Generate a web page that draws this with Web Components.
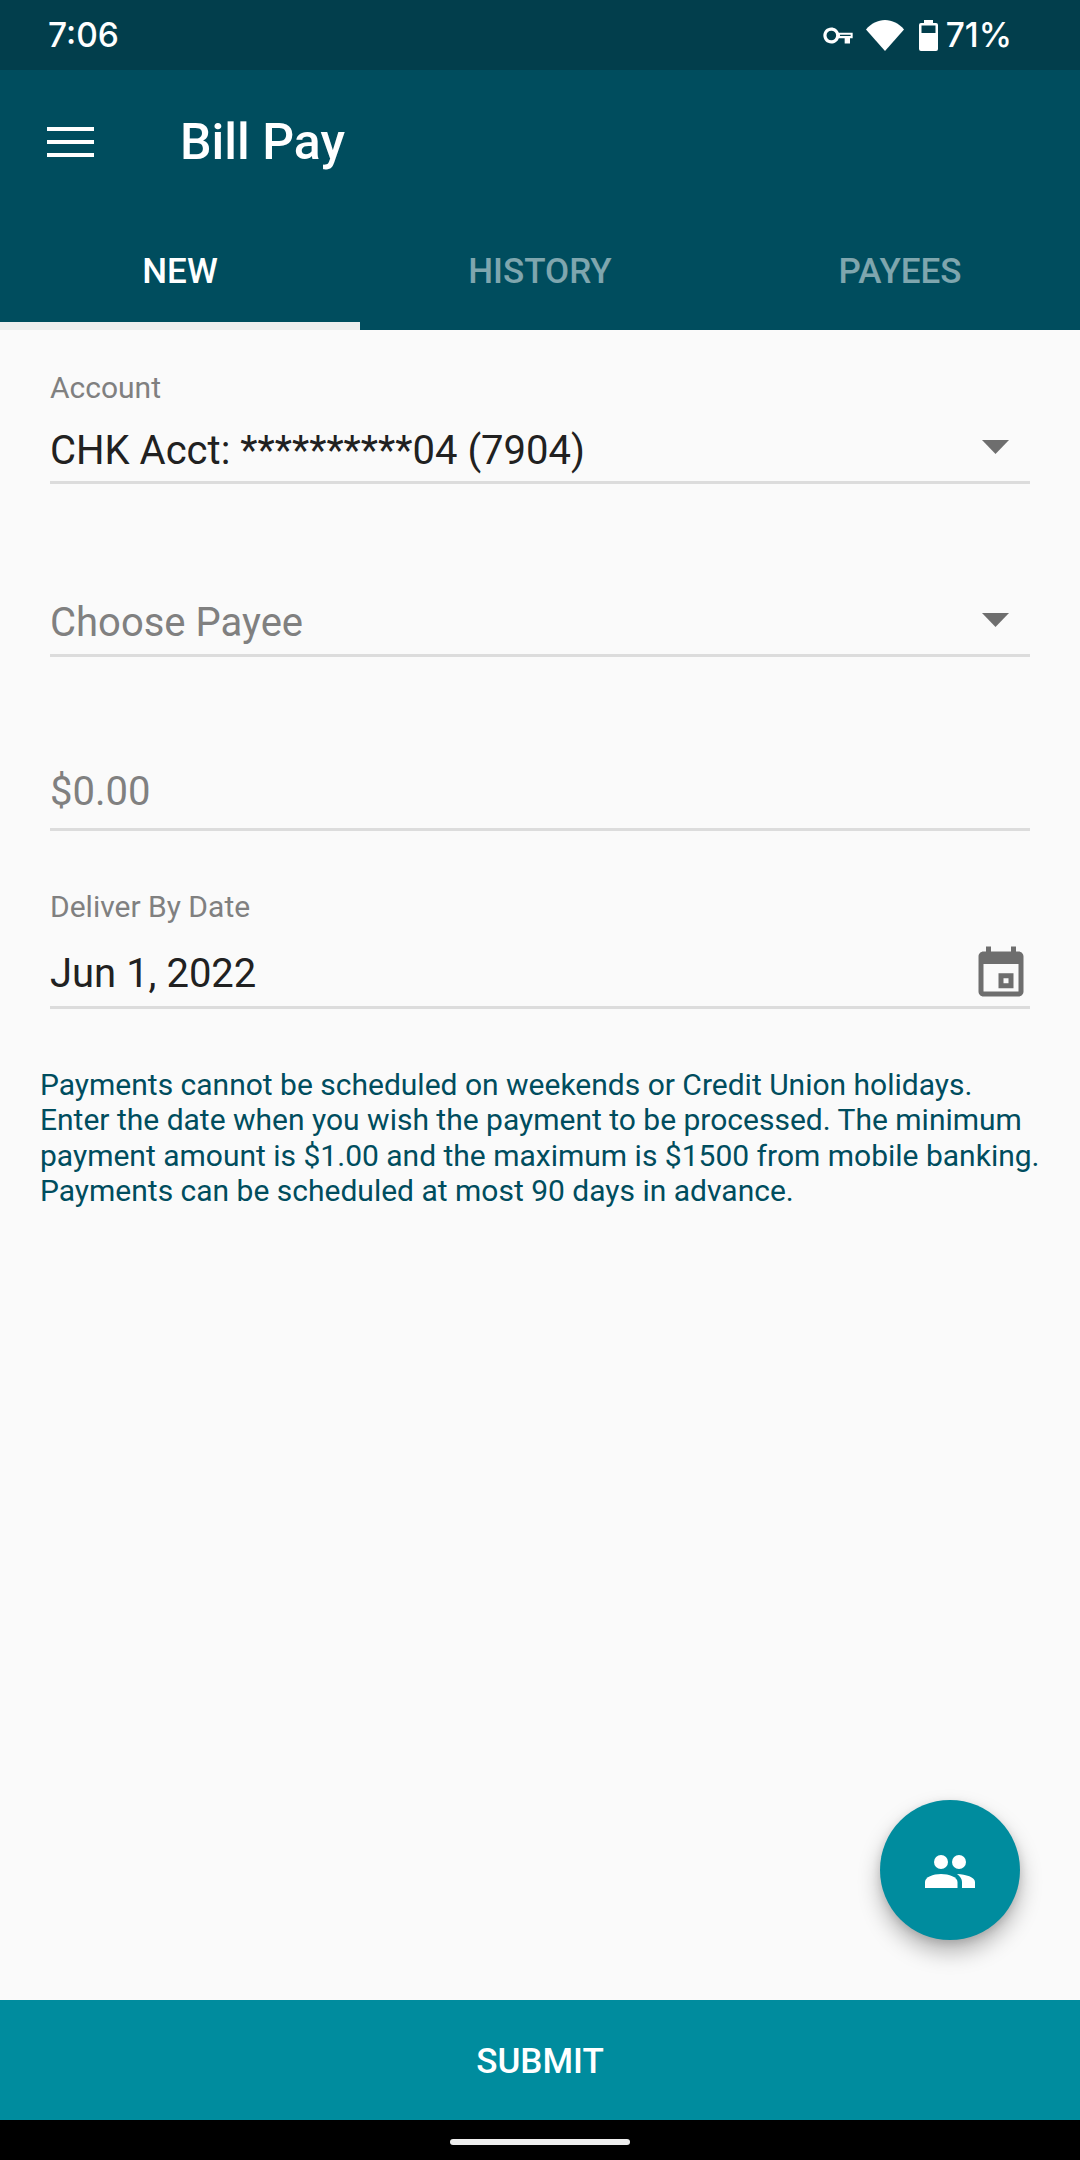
<!DOCTYPE html>
<html>
<head>
<meta charset="utf-8">
<style>
  html, body { margin: 0; padding: 0; background: #fafafa; }
  body { font-family: Roboto, "Liberation Sans", sans-serif; }
  bill-pay-app { width: 1080px; height: 2160px; }
</style>
</head>
<body>
<bill-pay-app>
  <status-bar slot="top" time="7:06" level="71%"></status-bar>
  <app-toolbar slot="top" title="Bill Pay" tabs="NEW,HISTORY,PAYEES"></app-toolbar>

  <form-field gap="41" hold="15" label="Account" caret>CHK Acct: **********04 (7904)</form-field>
  <form-field gap="109" lift="2" empty caret>Choose Payee</form-field>
  <form-field gap="110" lift="12" empty>$0.00</form-field>
  <form-field gap="59" hold="21" lift="3" label="Deliver By Date" calendar>Jun 1, 2022</form-field>
  <help-note>
    Payments cannot be scheduled on weekends or Credit Union holidays.<br>
    Enter the date when you wish the payment to be processed. The minimum<br>
    payment amount is $1.00 and the maximum is $1500 from mobile banking.<br>
    Payments can be scheduled at most 90 days in advance.
  </help-note>
  <fab-button slot="fab"></fab-button>

  <submit-bar slot="bottom">SUBMIT</submit-bar>
  <nav-handle slot="bottom"></nav-handle>
</bill-pay-app>

<script>
class BillPayApp extends HTMLElement {
  constructor() {
    super()
    this.attachShadow({ mode: "open" }).innerHTML = `
      <style>
        :host { display: flex; flex-direction: column; background: #fafafa; color: #212121; }
        main { position: relative; flex: 1; min-height: 0; }
        .fab { position: absolute; right: 60px; bottom: 60px; }
      </style>
      <slot name="top"></slot>
      <main>
        <slot></slot>
        <div class="fab"><slot name="fab"></slot></div>
      </main>
      <slot name="bottom"></slot>
    `
  }
}

class StatusBar extends HTMLElement {
  connectedCallback() {
    this.attachShadow({ mode: "open" }).innerHTML = `
      <style>
        :host {
          display: flex; align-items: center; justify-content: space-between;
          height: 70px; padding: 0 68px 0 48px; background: #023e4c; color: #fff;
          font: 500 33.500px/70px Inter, Lato, sans-serif;
        }
        .right { display: flex; align-items: center; }
        svg { display: block; fill: #fff; }
        .key { margin-right: 12px; }
        .wifi { margin-right: 15px; }
        .batt { margin-right: 8px; }
      </style>
      <span>${this.getAttribute("time")}</span>
      <div class="right">
        <svg class="key" width="32" height="19" viewBox="0 5 24 14">
          <path fill-rule="evenodd" d="M12.650 10C11.830 7.670 9.610 6 7 6c-3.310 0-6 2.690-6 6s2.690 6 6 6c2.610 0 4.830-1.670 5.650-4H17v4h4v-4h2v-4zM7 8.400a3.600 3.600 0 1 1 0 7.200 3.600 3.600 0 0 1 0-7.200zM13.500 11.400h8v1h-8z"/>
        </svg>
        <svg class="wifi" width="38" height="31" viewBox="0 0 38 31">
          <path d="M19 31 0 9.500C5 3.500 12 0 19 0s14 3.500 19 9.500z"/>
        </svg>
        <svg class="batt" width="19" height="31" viewBox="0 0 19 31">
          <path fill-rule="evenodd" d="M5 0h9v3h3a2 2 0 0 1 2 2v24a2 2 0 0 1-2 2H2a2 2 0 0 1-2-2V5a2 2 0 0 1 2-2h3zM2.500 5.500V13h14V5.500z"/>
        </svg>
        <span>${this.getAttribute("level")}</span>
      </div>
    `
  }
}

class AppToolbar extends HTMLElement {
  connectedCallback() {
    const tabs = this.getAttribute("tabs").split(",")
      .map((t, i) => `<div class="tab ${i == 0 ? "on" : ""}">${t}</div>`).join("")
    this.attachShadow({ mode: "open" }).innerHTML = `
      <style>
        :host { display: block; height: 260px; background: #004d5e; color: #fff; }
        .bar { display: flex; align-items: center; height: 144px; padding-left: 47px; }
        .burger { display: flex; flex-direction: column; gap: 9px; width: 47px; margin-right: 86px; }
        .burger i { display: block; height: 4px; background: #fff; }
        h1 { margin: 0; font: 500 50px/1 Roboto, sans-serif; }
        .tabs { display: grid; grid-template-columns: repeat(3, 360px); height: 116px; }
        .tab {
          display: flex; align-items: center; justify-content: center;
          box-sizing: border-box; padding-top: 7px; border-bottom: 8px solid transparent;
          font: 500 35px/1 Roboto, sans-serif; color: rgba(255, 255, 255, .5);
        }
        .tab.on { color: #fff; border-bottom-color: #eee; }
      </style>
      <div class="bar">
        <div class="burger"><i></i><i></i><i></i></div>
        <h1>${this.getAttribute("title")}</h1>
      </div>
      <div class="tabs">${tabs}</div>
    `
  }
}

class FormField extends HTMLElement {
  connectedCallback() {
    const label = this.getAttribute("label")
    const hold = this.getAttribute("hold") || 16
    const lift = this.getAttribute("lift") || 0
    let icon = ""
    if (this.hasAttribute("caret")) {
      icon = `<svg class="caret" width="27" height="14" viewBox="0 0 27 14"><path d="M0 0h27L13.500 14z"/></svg>`
    }
    if (this.hasAttribute("calendar")) {
      icon = `<svg class="cal" width="60" height="60" viewBox="0 0 24 24"><path fill-rule="evenodd" d="M16 1v2H8V1H6v2H5C3.890 3 3.010 3.900 3.010 5L3 19c0 1.100.89 2 2 2h14c1.100 0 2-.9 2-2V5c0-1.100-.9-2-2-2h-1V1zm3 18H5V8h14zM17 11.700h-6v6h6zM15 13.700v2h-2v-2z"/></svg>`
    }
    this.attachShadow({ mode: "open" }).innerHTML = `
      <style>
        :host {
          display: block; margin: ${this.getAttribute("gap")}px 50px 0;
          border-bottom: 3px solid #dcdcdc;
        }
        .label { font-size: 30px; line-height: 34px; color: #808080; margin-bottom: ${hold}px; }
        .row { display: flex; align-items: center; justify-content: space-between; height: 61px; }
        .value { font-size: 40px; line-height: 48px; color: #212121; padding-bottom: ${lift}px; }
        .value.empty { color: #808080; }
        svg { display: block; fill: #6e6e6e; }
        .caret { margin: -8px 21px 0 0; }
        .cal { margin: -4px -1px 0 0; }
      </style>
      ${label ? `<div class="label">${label}</div>` : ""}
      <div class="row">
        <div class="value ${this.hasAttribute("empty") ? "empty" : ""}"><slot></slot></div>
        ${icon}
      </div>
    `
  }
}

class HelpNote extends HTMLElement {
  constructor() {
    super()
    this.attachShadow({ mode: "open" }).innerHTML = `
      <style>
        :host {
          display: block; margin: 58px 0 0 40px; white-space: nowrap;
          font-size: 30px; line-height: 35.300px; color: #004d5e;
        }
      </style>
      <slot></slot>
    `
  }
}

class FabButton extends HTMLElement {
  constructor() {
    super()
    this.attachShadow({ mode: "open" }).innerHTML = `
      <style>
        :host {
          display: flex; align-items: center; justify-content: center;
          width: 140px; height: 140px; border-radius: 50%; background: #008c9e;
          box-shadow: 0 12px 22px rgba(0, 0, 0, .28), 0 3px 8px rgba(0, 0, 0, .12);
        }
        svg { display: block; fill: #fff; margin-top: 2px; }
      </style>
      <svg width="50" height="34" viewBox="0 0 50 34">
        <circle cx="16" cy="8" r="7"/>
        <circle cx="34" cy="8" r="7"/>
        <path d="M0 34v-6c0-5 8-8 16-8s16.500 3 16.500 8v6z"/>
        <path d="M32 20c9 .5 18 3 18 8v6H37v-6c0-3-2-6-5-8z"/>
      </svg>
    `
  }
}

class SubmitBar extends HTMLElement {
  constructor() {
    super()
    this.attachShadow({ mode: "open" }).innerHTML = `
      <style>
        :host {
          display: flex; align-items: center; justify-content: center;
          box-sizing: border-box; padding-top: 2px;
          height: 120px; background: #008c9e; color: #fff;
          font: 500 35px/1 Roboto, sans-serif;
        }
      </style>
      <slot></slot>
    `
  }
}

class NavHandle extends HTMLElement {
  constructor() {
    super()
    this.attachShadow({ mode: "open" }).innerHTML = `
      <style>
        :host { display: flex; justify-content: center; height: 40px; background: #000; }
        div { width: 180px; height: 6px; margin-top: 19px; border-radius: 3px; background: #eee; }
      </style>
      <div></div>
    `
  }
}

customElements.define("bill-pay-app", BillPayApp)
customElements.define("status-bar", StatusBar)
customElements.define("app-toolbar", AppToolbar)
customElements.define("form-field", FormField)
customElements.define("help-note", HelpNote)
customElements.define("fab-button", FabButton)
customElements.define("submit-bar", SubmitBar)
customElements.define("nav-handle", NavHandle)
</script>
</body>
</html>
